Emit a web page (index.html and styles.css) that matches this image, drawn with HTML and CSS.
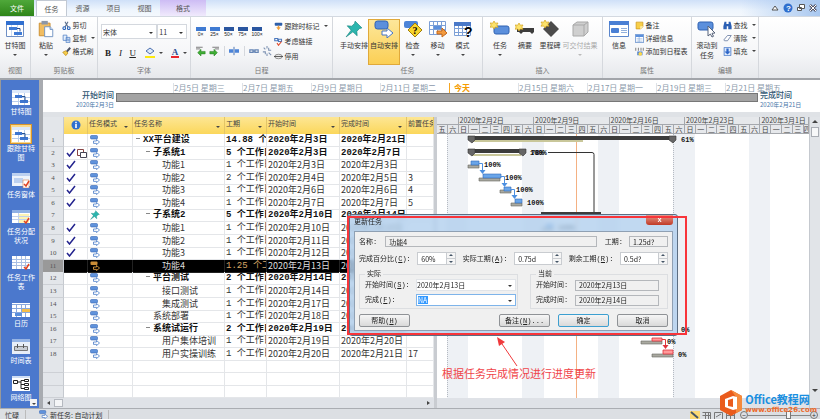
FILE: index.html
```html
<!DOCTYPE html>
<html lang="zh-CN">
<head>
  <meta charset="UTF-8">
  <meta name="viewport" content="width=device-width, initial-scale=1.0">
  <title>更新任务</title>
  <link rel="stylesheet" href="styles.css">
</head>
<body>
  <svg class="defs" width="0" height="0">
    <symbol id="i-gantt" viewBox="0 0 20 18"><path fill="#fff" stroke="#6f8fc4" d="M1.5 1.5h17v15h-17z"/><path fill="#2f6fd0" d="M1 1h18v4H1z"/><path stroke="#c9d9f0" d="M6.500 5v11M12.500 5v11"/><path fill="#3f7bd6" d="M4 7h8v3H4zM9 12h8v3H9z"/><path fill="none" stroke="#234a90" d="M12 8.500h3v3"/></symbol>
    <symbol id="i-paste" viewBox="0 0 18 20"><path fill="#f1bd62" stroke="#c98b2b" d="M1.500 3.500h12v14h-12z"/><path fill="#8c97a8" d="M4 1h7v4H4z"/><path fill="#fff" stroke="#6c8fc0" d="M7.500 7.500h6l3 3v8h-9z"/><path fill="#cfe0f6" stroke="#6c8fc0" d="M13.500 7.500v3h3"/></symbol>
    <symbol id="i-cut" viewBox="0 0 12 12"><path fill="none" stroke="#5c6f8d" stroke-width="1.500" d="M4 1l4 7M8 1L4 8"/><circle cx="3" cy="9.500" r="1.800" fill="none" stroke="#2460b8" stroke-width="1.400"/><circle cx="9" cy="9.500" r="1.800" fill="none" stroke="#2460b8" stroke-width="1.400"/></symbol>
    <symbol id="i-copy" viewBox="0 0 12 12"><path fill="#e4eefb" stroke="#4d7dc4" d="M1.500 1.500h5v7h-5zM5.500 4.500h5v7h-5z"/><path stroke="#4d7dc4" d="M7 7h3M7 9h3"/></symbol>
    <symbol id="i-brush" viewBox="0 0 12 12"><path fill="#f4cd4c" stroke="#bd8c1c" d="M1 7l4-2 3 3-3 3.500z"/><path stroke="#4a5266" stroke-width="2.500" d="M6.500 6L11 1"/></symbol>
    <symbol id="i-pin" viewBox="0 0 16 16"><path fill="#2bb5ae" stroke="#15857f" stroke-width=".6" d="M9 1l6 6-2 .5-2.500 2.500.3 4L7 10.500 1 15l4.500-6L2 5.200l4 .3L8.500 3z"/></symbol>
    <symbol id="i-auto" viewBox="0 0 20 18"><rect x="1" y="1" width="13" height="8" rx="2.500" fill="#5b8fdc" stroke="#2f62b4"/><path fill="#fff" stroke="#4475c4" d="M8 11h5V8l6 5-6 5v-3H8z"/></symbol>
    <symbol id="i-mode" viewBox="0 0 10 10"><rect x=".5" y=".5" width="7" height="3.500" rx="1" fill="#5f92dc" stroke="#3767b4" stroke-width=".6"/><path fill="#fff" stroke="#4a7cc8" stroke-width=".8" d="M3.500 6h3V4.500l3 2.500-3 2.600V8.400h-3z"/></symbol>
    <symbol id="i-mode-on" viewBox="0 0 10 10"><rect x=".5" y=".5" width="7" height="3.500" rx="1" fill="#c98c36"/><path fill="none" stroke="#d99a3e" stroke-width=".9" d="M3.500 6h3V4.500l3 2.500-3 2.600V8.400h-3z"/></symbol>
    <symbol id="i-check" viewBox="0 0 20 18"><rect x="1" y="1" width="14" height="7" rx="2" fill="#4c84d8"/><path fill="#f8d42c" stroke="#a07d0c" d="M12 3l7 7-7 7-7-7z"/><text x="9.500" y="14" font-size="10" font-weight="bold" font-family="Liberation Serif">?</text></symbol>
    <symbol id="i-move" viewBox="0 0 20 18"><path fill="#fff" stroke="#7c9fd6" d="M1.500 1.500h16v13h-16zM1 5.500h17M1 9.500h17M5.500 1v14M9.500 1v14M13.500 1v14"/><path fill="#5b8fdc" d="M6 6h7v3H6z"/><path fill="#f29a3f" stroke="#c8691a" d="M9 11h5V8l5 5-5 4v-3H9z"/></symbol>
    <symbol id="i-cal" viewBox="0 0 20 18"><path fill="#fff" stroke="#7c9fd6" d="M1.500 2.500h16v13h-16zM1 8.500h17M1 12.500h17M5.500 3v12M9.500 3v12M13.500 3v12"/><path fill="#4a79c8" d="M1 2h17v4H1z"/><text x="11" y="17" font-size="14" font-weight="bold" font-family="Liberation Sans">?</text></symbol>
    <symbol id="i-task" viewBox="0 0 20 18"><rect x="4" y="6" width="15" height="8" rx="2" fill="#5b8fdc" stroke="#3163b2"/><path fill="#fce36c" stroke="#d6a31a" stroke-width=".7" d="M4 1l1.200 2.200L8 3 6.800 5 8 7.200 5.200 7 4 9 2.800 7 0 7.200 1.200 5 0 3l2.800.2z"/></symbol>
    <symbol id="i-summary" viewBox="0 0 20 18"><path fill="#3d3d3d" d="M2 8h17v4l-2 2-2-2H8l-2 2-2-2H2z"/><path fill="#fce36c" stroke="#d6a31a" stroke-width=".7" d="M4 3l1.200 2.200L8 5 6.800 7 8 9.200 5.200 9 4 11 2.800 9 0 9.200 1.200 7 0 5l2.800.2z"/></symbol>
    <symbol id="i-mile" viewBox="0 0 20 18"><path fill="#4b4b4b" d="M11 1l8 8-8 8-8-8z"/><path fill="#fce36c" stroke="#d6a31a" stroke-width=".7" d="M5 0l1.200 2.200L9 2 7.800 4 9 6.200 6.200 6 5 8 3.800 6 1 6.200 2.200 4 1 2l2.800.2z"/></symbol>
    <symbol id="i-box" viewBox="0 0 20 18"><path fill="#cfcfcf" stroke="#a9a9a9" d="M3 5l4-3h11v10l-4 4H3zM3 5h11v11M14 5l4-3"/></symbol>
    <symbol id="i-info" viewBox="0 0 20 16"><path fill="#fff" stroke="#5b86cc" d="M.5.5h19v15H.5z"/><path fill="#4a7fd4" d="M0 0h20v4H0z"/><rect x="2" y="7" width="8" height="5" rx="1" fill="#4a7fd4"/><path stroke="#92b0dd" d="M12 7.500h6M12 9.500h6M12 11.500h6"/></symbol>
    <symbol id="i-note" viewBox="0 0 12 12"><path fill="#f8cf48" stroke="#cf9a1c" d="M1.500 1.500h9v6l-3 3h-6z"/><path fill="#fff0b0" d="M7 11V7h4z"/></symbol>
    <symbol id="i-detail" viewBox="0 0 12 12"><path fill="#fff" stroke="#4d7dc4" d="M.5.5h11v11H.5z"/><path fill="#5c90dc" d="M1 1h10v3H1z"/><path stroke="#8fb0de" d="M2 6.500h8M2 9.500h8M5.500 4v7"/></symbol>
    <symbol id="i-addtl" viewBox="0 0 12 12"><path stroke="#555" d="M1 1v4M4.500 1v4M8 1v4M11 1v4"/><path fill="#4a7fd4" d="M3 6h7v5H3z"/><circle cx="7" cy="9" r="2.500" fill="#fbd84a"/></symbol>
    <symbol id="i-scroll" viewBox="0 0 20 18"><rect x="1" y="2" width="15" height="8" rx="2" fill="#5b8fdc" stroke="#3163b2"/><path fill="#fff" stroke="#56627a" d="M11 6l7 7-3 .3 1.500 3-1.500.7-1.600-3L11 16z"/></symbol>
    <symbol id="i-find" viewBox="0 0 12 12"><path fill="#2b5fb4" d="M2 1h2.500v3h3V1H10l1.500 6v4H7V7H5v4H.5V7z"/></symbol>
    <symbol id="i-clear" viewBox="0 0 12 12"><path fill="#fff" stroke="#5a6f98" d="M1 8l5-6h5l-5 7H2z"/></symbol>
    <symbol id="i-fill" viewBox="0 0 12 12"><path fill="#dbe8fb" stroke="#3c70c4" d="M1.500.5h9v11h-9z"/><path fill="#2e66c8" d="M4.500 2h3v4H10l-4 4-4-4h2.500z"/></symbol>
    <symbol id="i-mark" viewBox="0 0 12 12"><rect x="1" y="1" width="10" height="4" rx="1" fill="#2d5ea9"/><path fill="#f2a13c" d="M5 5h2v2h2l-3 4-3-4h2z"/></symbol>
    <symbol id="i-link" viewBox="0 0 12 12"><path fill="none" stroke="#4d79bd" stroke-width="1.500" d="M1 2h4v3H1zM6 3h4v3H6z"/><path fill="none" stroke="#e04a2b" stroke-width="1.500" d="M4 8l2 3 4-5"/></symbol>
    <symbol id="i-stop" viewBox="0 0 12 12"><ellipse cx="6" cy="6" rx="5" ry="3" fill="#e8e8e8" stroke="#777"/><path stroke="#333" d="M0 6h12"/></symbol>
    <symbol id="i-arrowl" viewBox="0 0 12 12"><path stroke="#666" d="M0 1.500h8M0 3.500h5"/><path fill="#3fae35" stroke="#237a1c" stroke-width=".6" d="M2 8l4-4v2.500h5v3H6V12z"/></symbol>
    <symbol id="i-arrowr" viewBox="0 0 12 12"><path stroke="#666" d="M4 1.500h8M7 3.500h5"/><path fill="#3fae35" stroke="#237a1c" stroke-width=".6" d="M10 8L6 4v2.500H1v3h5V12z"/></symbol>
    <symbol id="i-split" viewBox="0 0 12 12"><path fill="#4c84d8" d="M0 4h5v4H0zM7 4h5v4H7z"/><path stroke="#2f5fa8" d="M6 1v10"/></symbol>
    <symbol id="i-chain" viewBox="0 0 12 12"><path fill="none" stroke="#6786b5" stroke-width="1.500" d="M1 4.500h4v3H1zM7 4.500h4v3H7zM4 6h4"/></symbol>
    <symbol id="i-unchain" viewBox="0 0 12 12"><path fill="none" stroke="#7f93b3" stroke-width="1.300" d="M1 7h3v3M8 2v3h3M2 2l2 2M8 8l3 3M6 0v3M6 9v3"/></symbol>
    <symbol id="v-gantt" viewBox="0 0 18 15"><path fill="#fff" d="M0 0h18v15H0z"/><path fill="#dce8fa" d="M0 0h18v3H0z"/><path stroke="#b9cdec" d="M6.500 3v12M12.500 3v12M0 7.500h18M0 11.500h18"/><path fill="#3e76d0" d="M3 5h7v3H3zM8 10h8v3H8z"/><path fill="none" stroke="#24508f" d="M10 6.500h3v4"/></symbol>
    <symbol id="v-form" viewBox="0 0 18 15"><path fill="#eef3fb" d="M0 0h18v13H0z"/><path fill="#bcd0f0" d="M0 0h18v3H0zM2 5h9v5H2z"/><path fill="#fff" stroke="#d9824a" stroke-width=".6" d="M11 7h6v8h-6z"/><path fill="none" stroke="#e04322" stroke-width="1.500" d="M12 11l2 2 3-5"/></symbol>
    <symbol id="v-usage" viewBox="0 0 18 15"><path fill="#fff" d="M0 0h18v13H0z"/><path fill="#8fb0e4" d="M0 0h18v3H0z"/><path fill="#fdf4b4" d="M7 4h10v9H7z"/><path stroke="#c3d2ec" d="M0 6.500h18M0 9.500h18M6.500 3v10"/><path fill="none" stroke="#e04322" stroke-width="1.500" d="M12 11l2 2 3-5"/></symbol>
    <symbol id="v-sheet" viewBox="0 0 18 15"><path fill="#fff" d="M0 0h18v13H0z"/><path stroke="#a9bfe4" d="M0 3.500h18M0 6.500h18M0 9.500h18M4.500 0v13M9.500 0v13M13.500 0v13"/><path fill="none" stroke="#e04322" stroke-width="1.500" d="M12 11l2 2 3-5"/></symbol>
    <symbol id="v-cal" viewBox="0 0 18 15"><path fill="#fff" d="M0 1h18v14H0z"/><path stroke="#89a8dc" d="M0 2.500h18M0 6.500h18M0 10.500h18M4.500 3v12M9.500 3v12M13.500 3v12"/><path fill="#f4bd4a" d="M10 7h8v3h-8z"/><path fill="#5b8fdc" d="M3 11h7v3H3z"/></symbol>
    <symbol id="v-line" viewBox="0 0 18 15"><path fill="#e8eef8" d="M0 0h18v15H0z"/><path fill="#96b4e4" d="M0 0h18v3H0z"/><path fill="#c9cdd4" stroke="#777" d="M2.500 7.500h13v4h-13z"/><path stroke="#555" d="M5.500 5v4M11.500 5v4"/></symbol>
    <symbol id="v-net" viewBox="0 0 18 15"><path fill="#fff" d="M0 0h18v15H0z"/><path fill="#cfdef5" d="M0 0h18v2H0z"/><path fill="none" stroke="#222" d="M1.500 4.500h4v3h-4zM12.500 3.500h4v2h-4zM12.500 7.500h4v2h-4zM12.500 11.500h4v2h-4zM6 6h3M12 4.500H9v8h3M9 8.500h3"/></symbol>
  </svg>

  <nav class="tabs">
    <button class="tab file">文件</button>
    <button class="tab active">任务</button>
    <button class="tab">资源</button>
    <button class="tab">项目</button>
    <button class="tab">视图</button>
    <button class="tab format">格式</button>
    <div class="window-tools">
      <svg width="8" height="8" viewBox="0 0 8 8"><path fill="#fff" stroke="#555" d="M1 6l3-4 3 4z"/></svg>
      <svg width="10" height="10" viewBox="0 0 10 10"><circle cx="5" cy="5" r="4.500" fill="#2f6fce"/><text x="3" y="8" font-size="8" font-weight="bold" fill="#fff" font-family="Liberation Sans">?</text></svg>
      <svg width="8" height="8" viewBox="0 0 8 8"><path fill="#fff" stroke="#555" d="M2.500.5h5v4h-5zM.5 3.500h4v3h-4z"/></svg>
      <svg width="8" height="8" viewBox="0 0 8 8"><path stroke="#556" stroke-width="2.500" d="M1 1l6 6M7 1L1 7"/><path stroke="#fff" d="M1 1l6 6M7 1L1 7"/></svg>
    </div>
  </nav>

  <header class="ribbon">
    <section class="group g-view">
      <div class="group-body"><button class="big"><svg><use href="#i-gantt"/></svg>甘特图<i class="caret"></i></button></div>
      <h2>视图</h2>
    </section>
    <section class="group g-clip">
      <div class="group-body">
        <button class="big"><svg><use href="#i-paste"/></svg>粘贴<i class="caret"></i></button>
        <div class="stack">
          <button class="small"><svg><use href="#i-cut"/></svg>剪切</button>
          <button class="small"><svg><use href="#i-copy"/></svg>复制<i class="caret"></i></button>
          <button class="small"><svg><use href="#i-brush"/></svg>格式刷</button>
        </div>
      </div>
      <h2>剪贴板</h2>
    </section>
    <section class="group g-font">
      <div class="group-body font-body">
        <div class="font-pick">
          <span class="combo family"><select aria-label="字体"><option>宋体</option></select></span>
          <span class="combo size"><select aria-label="字号"><option>11</option></select></span>
        </div>
        <div class="font-style">
          <button><b>B</b></button><button><em>I</em></button><button><u>U</u></button>
          <button class="color fill-color"><svg width="10" height="8" viewBox="0 0 10 8"><path fill="#dce8fa" stroke="#4a6fae" d="M1 4l4-3 4 3-4 3z"/></svg></button><i class="caret"></i>
          <button class="color text-color"><b>A</b></button><i class="caret"></i>
        </div>
      </div>
      <h2>字体</h2>
    </section>
    <section class="group g-sched">
      <div class="group-body">
        <div class="sched-left">
          <div class="percents"><button>0×</button><button>25×</button><button>50×</button><button>75×</button><button>100×</button></div>
          <div class="sched-tools">
            <button aria-label="降级"><svg><use href="#i-arrowl"/></svg></button><button aria-label="升级"><svg><use href="#i-arrowr"/></svg></button>
            <button class="sep" aria-label="拆分"><svg><use href="#i-split"/></svg></button>
            <button class="sep" aria-label="链接"><svg><use href="#i-chain"/></svg></button><button aria-label="取消链接"><svg><use href="#i-unchain"/></svg></button>
          </div>
        </div>
        <div class="stack wide">
          <button class="small"><svg><use href="#i-mark"/></svg>跟踪时标记<i class="caret"></i></button>
          <button class="small"><svg><use href="#i-link"/></svg>考虑链接</button>
          <button class="small"><svg><use href="#i-stop"/></svg>停用</button>
        </div>
      </div>
      <h2>日程</h2>
    </section>
    <section class="group g-task">
      <div class="group-body">
        <button class="big"><svg><use href="#i-pin"/></svg>手动安排</button>
        <button class="big on"><svg><use href="#i-auto"/></svg>自动安排</button>
        <button class="big"><svg><use href="#i-check"/></svg>检查<i class="caret"></i></button>
        <button class="big"><svg><use href="#i-move"/></svg>移动<i class="caret"></i></button>
        <button class="big"><svg><use href="#i-cal"/></svg>模式<i class="caret"></i></button>
      </div>
      <h2>任务</h2>
    </section>
    <section class="group g-insert">
      <div class="group-body">
        <button class="big"><svg><use href="#i-task"/></svg>任务<i class="caret"></i></button>
        <button class="big"><svg><use href="#i-summary"/></svg>摘要</button>
        <button class="big"><svg><use href="#i-mile"/></svg>里程碑</button>
        <button class="big off"><svg><use href="#i-box"/></svg>可交付结果<i class="caret"></i></button>
      </div>
      <h2>插入</h2>
    </section>
    <section class="group g-props">
      <div class="group-body">
        <button class="big"><svg><use href="#i-info"/></svg>信息</button>
        <div class="stack">
          <button class="small"><svg><use href="#i-note"/></svg>备注</button>
          <button class="small"><svg><use href="#i-detail"/></svg>详细信息</button>
          <button class="small"><svg><use href="#i-addtl"/></svg>添加到日程表</button>
        </div>
      </div>
      <h2>属性</h2>
    </section>
    <section class="group g-edit">
      <div class="group-body">
        <button class="big"><svg><use href="#i-scroll"/></svg>滚动到<br>任务</button>
        <div class="stack">
          <button class="small"><svg><use href="#i-find"/></svg>查找<i class="caret"></i></button>
          <button class="small"><svg><use href="#i-clear"/></svg>清除<i class="caret"></i></button>
          <button class="small"><svg><use href="#i-fill"/></svg>填充<i class="caret"></i></button>
        </div>
      </div>
      <h2>编辑</h2>
    </section>
  </header>

  <main class="workspace">
    <nav class="views">
      <a href="#"><span><svg><use href="#v-gantt"/></svg></span>甘特图</a>
      <a href="#" class="current"><span><svg><use href="#v-gantt"/></svg></span>跟踪甘特图</a>
      <a href="#"><span><svg><use href="#v-form"/></svg></span>任务窗体</a>
      <a href="#"><span><svg><use href="#v-usage"/></svg></span>任务分配状况</a>
      <a href="#"><span><svg><use href="#v-sheet"/></svg></span>任务工作表</a>
      <a href="#"><span><svg><use href="#v-cal"/></svg></span>日历</a>
      <a href="#"><span><svg><use href="#v-line"/></svg></span>时间表</a>
      <a href="#"><span><svg><use href="#v-net"/></svg></span>网络图</a>
      <button class="more" aria-label="更多"><i class="caret"></i></button>
    </nav>

    <div class="content">
      <section class="timeline">
        <div class="edge start"><strong>开始时间</strong><small>2020年2月3日</small></div>
        <div class="track">
          <div class="ticks">
            <span>2月5日 星期三</span><span>2月7日 星期五</span><span>2月9日 星期日</span><span>2月11日 星期二</span><span class="today">今天</span><span>2月15日 星期六</span><span>2月17日 星期一</span><span>2月19日 星期三</span><span>2月21日 星期五</span>
          </div>
          <div class="track-bar"></div>
        </div>
        <div class="edge end"><strong>完成时间</strong><small>2020年2月21日</small></div>
      </section>

      <div class="split">
        <section class="sheet">
          <table>
            <thead>
              <tr>
                <th></th>
                <th class="info"><svg width="10" height="10" viewBox="0 0 10 10"><circle cx="5" cy="5" r="4.500" fill="#2e6fd0"/><path stroke="#fff" stroke-width="1.600" d="M5 4v4M5 1.800v1.400"/></svg></th>
                <th>任务模式<i class="caret"></i></th>
                <th>任务名称<i class="caret"></i></th>
                <th>工期<i class="caret"></i></th>
                <th>开始时间<i class="caret"></i></th>
                <th>完成时间<i class="caret"></i></th>
                <th>前置任务</th>
              </tr>
            </thead>
            <tbody id="rows"></tbody>
          </table>
          <div class="hscroll"><i class="left"></i><i class="thumb"></i><i class="right"></i></div>
        </section>

        <section class="gantt">
          <div class="chart-side">
            <div class="scale weeks"><span></span><span>2020年2月2日</span><span>2020年2月9日</span><span>2020年2月16日</span><span>2020年2月23日</span><span>2020年3月1日</span></div>
            <div class="scale days" id="days"></div>
            <svg class="chart">
              <g fill="#eef1f5"><path d="M10 0h21v264h-21zM85 0h22v264h-22zM161 0h21v264h-21zM236 0h22v264h-22zM312 0h21v264h-21z"/></g>
              <path stroke="#b5bac2" stroke-dasharray="1 1" d="M10.500 0v264M236.500 0v264"/>
              <path stroke="#f4b183" d="M139.500 0v264"/>
              <g fill="#a9a9a0" stroke="#66665f" stroke-width=".6">
                <path d="M31 31h11v3h-11zM42 44h21v3h-21zM63 56h11v3h-11zM74 69h11v3h-11zM105 94h11v3h-11zM204 207h21v3h-21zM215 220h21v3h-21z"/>
              </g>
              <g fill="#6aa5e8" stroke="#2f6ab8" stroke-width=".6">
                <path d="M34 27h8v4h-8zM46 40h18v4h-18zM67 53h7v4h-7zM78 65h7v4h-7zM109 90h7v4h-7z"/>
              </g>
              <g fill="#ff9a9a" stroke="#e0343c" stroke-width=".8">
                <path d="M215 204h10v3h-10zM226 216h10v4h-10z"/>
              </g>
              <g fill="none" stroke="#4c8fe0">
                <path d="M42 29.500h3.500v8M64 42.500h3.500v8M74 55.500h3.500v8"/>
              </g>
              <path fill="#4c8fe0" d="M42.500 36h6l-3 4zM64.500 49h6l-3 4zM74.500 61h6l-3 4z"/>
              <path fill="none" stroke="#e0343c" d="M225 205.500h3.500v7"/>
              <path fill="#e0343c" d="M225.500 211h6l-3 4z"/>
              <path fill="none" stroke="#333" d="M111 18.500h44q2 0 2 2v60"/>
              <path fill="#3c3c3c" d="M32 2h206v4h-206zM32 15h56v4h-56zM104 78h60v3h-60z"/>
              <path fill="#c9c79a" d="M35 6h111v2h-111zM35 20h49v2h-49z"/>
              <g fill="#666" stroke="#333" stroke-width=".6">
                <path d="M31 2h7v4l-3 3-4-3zM232 2h7v4l-3 3-4-3zM31 15h7v4l-3 3-4-3zM82 15h7v4l-3 3-4-3z"/>
              </g>
              <g class="percent">
                <text x="244" y="8">61%</text><text x="93" y="21">100%</text><text x="94" y="21">78%</text>
                <text x="47" y="33">100%</text><text x="68" y="46">100%</text><text x="79" y="58">100%</text><text x="90" y="71">100%</text>
                <text x="121" y="96">100%</text>
                <text x="244" y="198">0%</text><text x="230" y="210">0%</text><text x="241" y="223">0%</text>
              </g>
            </svg>
            <div class="hscroll"></div>
          </div>
          <div class="vscroll"><i class="up"></i><i class="thumb"></i><i class="down"></i></div>
        </section>
      </div>
    </div>
  </main>

  <footer class="status">
    <span class="busy">忙碌</span>
    <span class="mode"><svg width="9" height="9"><use href="#i-mode"/></svg>新任务: 自动计划</span>
    <div class="status-views">
      <svg class="on" viewBox="0 0 10 9"><path stroke="#456" stroke-width="2" d="M1 1l7 6"/></svg>
      <svg viewBox="0 0 10 9"><path fill="none" stroke="#777" d="M.5 1.500h8v7M.5 4.500h8M3.500 1v8M6.500 1v8"/></svg>
      <svg viewBox="0 0 10 9"><path fill="none" stroke="#777" d="M.5 1.500h8v7h-8zM2 6l5-3"/></svg>
      <svg viewBox="0 0 10 9"><path fill="none" stroke="#777" d="M.5 1.500h8v7h-8zM4.500 1v8M0 4.500h9"/></svg>
    </div>
    <button class="zoom-btn">−</button><input type="range" aria-label="缩放" value="66"><button class="zoom-btn">+</button>
  </footer>

  <form class="dialog">
    <div class="title"><span>更新任务</span><button type="button" class="close">x</button></div>
    <div class="panel">
      <div class="line">
        <label for="name">名称:</label><input id="name" class="grow" value="功能4" readonly>
        <label for="duration" class="before-duration">工期:</label><input id="duration" class="w38" value="1.25d?" readonly>
      </div>
      <div class="line spin-line">
        <label for="done">完成百分比(<u>C</u>):</label><span class="spin w38"><input id="done" value="60%"><i></i></span>
        <label for="actual">实际工期(<u>A</u>):</label><span class="spin w48"><input id="actual" value="0.75d"><i></i></span>
        <label for="left">剩余工期(<u>R</u>):</label><span class="spin w48"><input id="left" value="0.5d?"><i></i></span>
      </div>
      <div class="sets">
        <fieldset class="real">
          <legend>实际</legend>
          <label for="start">开始时间(<u>S</u>):</label><span class="combo"><select id="start"><option>2020年2月13日</option></select></span>
          <label for="finish">完成(<u>F</u>):</label><span class="combo focus"><input id="finish" value="NA"></span>
        </fieldset>
        <fieldset class="now">
          <legend>当前</legend>
          <label for="cstart">开始时间:</label><input id="cstart" value="2020年2月13日" readonly>
          <label for="cfinish">完成时间:</label><input id="cfinish" value="2020年2月14日" readonly>
        </fieldset>
      </div>
      <div class="actions">
        <button type="button" class="help">帮助(<u>H</u>)</button>
        <button type="button">备注(<u>N</u>)...</button>
        <button type="button" class="ok">确定</button>
        <button type="button">取消</button>
      </div>
    </div>
  </form>
  <div class="red-frame"></div>
  <svg class="red-arrow" width="24" height="30" viewBox="0 0 24 30"><path fill="none" stroke="#f0393c" d="M21 29L4 4"/><path fill="#f0393c" d="M1 0l8 5-6 4z"/></svg>
  <p class="hint">根据任务完成情况进行进度更新</p>
  <div class="brand">
    <svg width="22" height="26" viewBox="0 0 22 26"><path fill="#ea5b1c" d="M11 0l11 6v14l-11 6-11-6V6z"/><path fill="#f58a3c" d="M11 0l11 6v14l-6 3V7z"/><path fill="#fff" fill-rule="evenodd" d="M5 9l8-3 4 1v12l-4 1-8-3zM8 10v6l5 1V8.500z"/></svg>
    <div><strong>Office教程网</strong><span>www.office26.com</span></div>
  </div>

  <script>
    // flags: s = summary, c = complete, p = pinned, x = selected
    const tasks = [
      ['XX平台建设', 0, '14.88 个工作日', '2020年2月3日', '2020年2月21日', '', 's'],
      ['子系统1', 1, '5 个工作日', '2020年2月3日', '2020年2月7日', '', 'scn'],
      ['功能1', 2, '1 个工作日', '2020年2月3日', '2020年2月3日', '', 'c'],
      ['功能2', 2, '2 个工作日', '2020年2月4日', '2020年2月5日', '3', 'c'],
      ['功能3', 2, '1 个工作日', '2020年2月6日', '2020年2月6日', '4', 'c'],
      ['功能4', 2, '1 个工作日', '2020年2月7日', '2020年2月7日', '5', 'c'],
      ['子系统2', 1, '5 个工作日', '2020年2月10日', '2020年2月14日', '', 'sp'],
      ['功能1', 2, '1 个工作日', '2020年2月10日', '2020年2月10日', '', 'c'],
      ['功能2', 2, '1 个工作日', '2020年2月11日', '2020年2月11日', '', 'c'],
      ['功能3', 2, '1 个工作日', '2020年2月12日', '2020年2月12日', '', 'c'],
      ['功能4', 2, '1.25 个工作日', '2020年2月13日', '2020年2月14日', '', 'x'],
      ['平台测试', 1, '2 个工作日', '2020年2月14日', '2020年2月17日', '', 's'],
      ['接口测试', 2, '1 个工作日', '2020年2月14日', '2020年2月14日', '', ''],
      ['集成测试', 2, '1 个工作日', '2020年2月17日', '2020年2月17日', '', ''],
      ['系统部署', 1, '1 个工作日', '2020年2月18日', '2020年2月18日', '', ''],
      ['系统试运行', 1, '2 个工作日', '2020年2月19日', '2020年2月20日', '', 's'],
      ['用户集体培训', 2, '1 个工作日', '2020年2月19日', '2020年2月20日', '', ''],
      ['用户实操训练', 2, '1 个工作日', '2020年2月20日', '2020年2月21日', '17', '']
    ];
    const tick = '<svg width="10" height="9" viewBox="0 0 10 9"><path fill="none" stroke="#23238e" stroke-width="1.500" d="M1 5l2.500 3L9 1"/></svg>';
    const clip = '<svg width="10" height="10" viewBox="0 0 10 10"><path fill="#fff" stroke="#844" d="M.5 1.500h6v6h-6z"/><path fill="#fff" stroke="#445" d="M3.500 4.500h6v5h-6z"/></svg>';
    let html = '';
    for (let i = 0; i < 21; i++) {
      const t = tasks[i];
      if (!t) {
        html += '<tr><th></th>' + '<td></td>'.repeat(7) + '</tr>';
        continue;
      }
      const f = t[6];
      const icon = f.includes('p') ? 'i-pin' : f.includes('x') ? 'i-mode-on' : 'i-mode';
      html += `<tr class="${f.includes('s') ? 'summary' : ''} ${f.includes('x') ? 'selected' : ''}"><th>${i + 1}</th>`
        + `<td>${f.includes('c') ? tick : ''}${f.includes('n') ? clip : ''}</td>`
        + `<td><svg width="10" height="10"><use href="#${icon}"/></svg></td>`
        + `<td class="name level${t[1]}">${f.includes('s') ? '<i class="fold"></i>' : ''}${t[0]}</td>`
        + `<td class="duration">${t[2]}</td><td>${t[3]}</td><td>${t[4]}</td><td>${t[5]}</td></tr>`;
    }
    document.getElementById('rows').innerHTML = html;

    const week = '日一二三四五六';
    let days = '';
    for (let d = 5; d < 40; d++) {
      days += `<span>${week[d % 7]}</span>`;
    }
    document.getElementById('days').innerHTML = days;
  </script>
</body>
</html>
```
FILE: styles.css
```css
* {
    box-sizing: border-box;
}

body {
    position: relative;
    display: flex;
    flex-direction: column;
    height: 100vh;
    margin: 0;
    overflow: hidden;
    font-family: "Noto Sans CJK SC", sans-serif;
    font-size: 7px;
    line-height: 10px;
    color: #333;
    background-color: #fff;
}

button, input, select {
    margin: 0;
    padding: 0;
    border: none;
    border-radius: 0;
    background: none;
    font: inherit;
    color: inherit;
    appearance: none;
}

a {
    color: inherit;
    text-decoration: none;
}

.defs {
    position: absolute;
}

.caret {
    display: inline-block;
    border: 2px solid transparent;
    border-top-color: #444;
    border-bottom: none;
}

/* tabs */
.tabs {
    display: flex;
    flex: none;
    height: 16px;
    background: linear-gradient(#cfe0f8, #eef5fd 60%, #f4f8fd);
}
.tab {
    width: 31px;
    color: #555;
}
.tab.file {
    width: 34px;
    margin-right: 2px;
    color: #fff;
    background: linear-gradient(#4fa83a, #2d8418);
}
.tab.active {
    border: 1px solid #c2c9d3;
    border-bottom: none;
    background-color: #fff;
}
.tab.format {
    width: 46px;
    background: linear-gradient(#cdbcf4, #f0eafc);
}
.window-tools {
    display: flex;
    align-items: center;
    gap: 4px;
    margin-left: auto;
    padding: 0 3px 0 30px;
    background: linear-gradient(90deg, transparent, #a9c8f0);
}

/* ribbon */
.ribbon {
    display: flex;
    flex: none;
    height: 64px;
    border-top: 1px solid #d3d9e1;
    border-bottom: 2px solid #a2a5aa;
    background: linear-gradient(#fff, #f5f6f8 60%, #e6e8ec);
}
.group {
    display: flex;
    flex-direction: column;
    flex: none;
    padding-top: 2px;
    border-right: 1px solid #d5d8dd;
}
.group-body {
    display: flex;
    justify-content: center;
    height: 46px;
}
.group h2 {
    margin: 0;
    font-size: 7px;
    font-weight: normal;
    text-align: center;
    color: #777;
}
.g-view { width: 31px; }
.g-clip { width: 67px; }
.g-font { width: 93px; }
.g-sched { width: 142px; }
.g-task { width: 150px; }
.g-insert { width: 120px; }
.g-props { width: 89px; }
.g-edit { width: 67px; }

.big {
    display: flex;
    flex-direction: column;
    align-items: center;
    min-width: 25px;
    padding-top: 1px;
}
.big svg {
    width: 20px;
    height: 18px;
    margin-bottom: 2px;
}
.big .caret {
    margin-top: 4px;
}
.big.on {
    min-width: 32px;
    border: 1px solid #e0a93a;
    padding-top: 0;
    background: linear-gradient(#fde79a, #fbcf55);
}
.big.off {
    color: #aaa;
}
.big.off .caret {
    border-top-color: #bbb;
}
.stack {
    display: flex;
    flex-direction: column;
    gap: 3px;
    padding: 1px 0 0 3px;
}
.stack.wide {
    gap: 5px;
    padding: 2px 0 0 2px;
}
.small {
    display: flex;
    align-items: center;
    gap: 2px;
    height: 10px;
    white-space: nowrap;
}
.small svg {
    width: 9px;
    height: 9px;
}
.small .caret {
    margin-left: 2px;
}

.combo {
    position: relative;
    display: flex;
    border: 1px solid #d4d8de;
    background-color: #fff;
}
.combo::after {
    content: "";
    position: absolute;
    top: 50%;
    right: 3px;
    border: 2px solid transparent;
    border-top-color: #333;
    border-bottom: none;
}
.combo select {
    width: 100%;
}

.font-body {
    flex-direction: column;
    justify-content: flex-start;
    gap: 8px;
    padding: 5px 3px 0;
}
.font-pick {
    display: flex;
}
.font-pick .combo {
    height: 15px;
    padding-left: 1px;
}
.family {
    flex: 2;
}
.size {
    flex: 1;
}
.font-style {
    display: flex;
    align-items: center;
    gap: 4px;
    padding-left: 3px;
    font-family: "Liberation Serif", serif;
    font-size: 9px;
    color: #222;
}
.font-style button {
    width: 10px;
}
.font-style .color {
    margin-left: 4px;
    border-bottom: 2px solid #fde910;
    line-height: 8px;
}
.font-style .text-color {
    border-bottom-color: #e8252c;
    color: #2d4f93;
}

.sched-left {
    display: flex;
    flex-direction: column;
    gap: 9px;
    padding-top: 8px;
}
.percents {
    display: flex;
    gap: 4px;
}
.percents button {
    width: 10px;
    border-top: 4px solid #3f7ad2;
    font-family: "Liberation Sans", sans-serif;
    font-size: 5px;
    line-height: 6px;
    color: #222;
}
.percents button:nth-child(n+3) {
    border-top-color: #2a56a0;
}
.sched-tools {
    display: flex;
    gap: 3px;
}
.sched-tools svg {
    display: block;
    width: 10px;
    height: 10px;
}
.sched-tools .sep {
    margin-left: 2px;
    padding-left: 4px;
    border-left: 1px solid #d5d8dd;
}

/* left view bar */
.workspace {
    display: flex;
    flex: 1;
    min-height: 0;
}
.views {
    position: relative;
    display: flex;
    flex: none;
    flex-direction: column;
    gap: 8px;
    width: 43px;
    padding: 7px 5px 0 4px;
    border-left: 1px solid #999;
    border-right: 4px solid #a8abb0;
    overflow: hidden;
    background-color: #4b78cd;
    color: #fff;
    line-height: 9px;
    text-align: center;
}
.views a {
    display: block;
    flex: none;
    margin-right: -3px;
    padding: 0 2px;
}
.views a span {
    display: flex;
    align-items: center;
    justify-content: center;
    width: 22px;
    height: 20px;
    margin: 0 auto;
}
.views a svg {
    width: 18px;
    height: 15px;
}
.views .current span {
    border: 1px solid #d9962c;
    background-color: #fbd98a;
}
.more {
    position: absolute;
    right: 2px;
    bottom: 2px;
    width: 7px;
    height: 7px;
    background-color: #f4f4f4;
    line-height: 4px;
}

/* timeline */
.content {
    display: flex;
    flex: 1;
    flex-direction: column;
    min-width: 0;
}
.timeline {
    display: flex;
    flex: none;
    height: 32px;
    overflow: hidden;
}
.edge {
    display: flex;
    flex-direction: column;
    padding-top: 10px;
    color: #2d5572;
}
.edge strong {
    font-size: 8px;
    font-weight: 500;
}
.edge small {
    font-size: 6px;
    line-height: 9px;
    color: #4876a8;
}
.edge.start {
    width: 71px;
    align-items: flex-end;
}
.edge.end {
    width: 60px;
}
.track {
    flex: 1;
    margin: 3px 2px 0;
}
.ticks {
    display: grid;
    grid-template-columns: repeat(9, 1fr);
    margin: 0 -36px 0 57px;
    font-size: 8px;
    color: #8b9aab;
    white-space: nowrap;
}
.ticks span {
    border-left: 1px solid #dde2e8;
}
.ticks .today {
    padding-left: 4px;
    border-left-color: #f5a623;
    color: #f59c00;
    font-weight: bold;
}
.track-bar {
    height: 9px;
    border: 1px solid #777;
    background-color: #a3a3a3;
}

/* task sheet */
.split {
    display: flex;
    flex: 1;
    min-height: 0;
    border-top: 5px solid #dfe2e6;
}
.sheet {
    display: flex;
    flex: 0 0 391px;
    flex-direction: column;
    min-width: 0;
}
table, tbody {
    display: flex;
    flex: 1;
    flex-direction: column;
    min-height: 0;
}
thead {
    display: block;
}
tr {
    display: grid;
    flex: 1;
    grid-template-columns: 21px 24px 45px 92px 42px 73px 67px 1fr;
    min-height: 0;
}
thead tr {
    height: 17px;
}
thead th {
    position: relative;
    padding: 1px 0 0 1px;
    border-right: 1px solid #e3c567;
    overflow: hidden;
    background: linear-gradient(#fde694, #fbd75b);
    font-weight: normal;
    text-align: left;
    white-space: nowrap;
    color: #444;
}
thead th:first-child {
    border-color: #c5c9cf;
    background: #e3e6ea;
}
thead .info {
    padding: 3px 0 0 7px;
}
thead .caret {
    position: absolute;
    right: 4px;
    bottom: 6px;
}
tbody th {
    border-right: 1px solid #c5c9cf;
    border-bottom: 1px solid #cdd0d5;
    background-color: #e3e6ea;
    font-family: "Liberation Serif", serif;
    font-size: 7px;
    font-weight: normal;
    color: #555;
}
td {
    padding: 0 0 0 1px;
    border-right: 1px solid #e4e6e9;
    border-bottom: 1px solid #e4e6e9;
    overflow: hidden;
    font-size: 9px;
    line-height: 12px;
    white-space: nowrap;
}
td svg {
    display: inline-block;
    margin: 1px 0 0 1px;
    vertical-align: top;
}
.duration {
    font-family: "Liberation Mono", "Noto Sans CJK SC", monospace;
}
.summary td {
    font-family: "Liberation Mono", "Noto Sans CJK SC", monospace;
    font-weight: bold;
    color: #111;
}
.name.level0 { padding-left: 10px; }
.name.level1 { padding-left: 20px; }
.name.level2 { padding-left: 29px; }
.summary .name.level0 { padding-left: 3px; }
.summary .name.level1 { padding-left: 13px; }
.fold {
    display: inline-block;
    width: 4px;
    height: 1px;
    margin-right: 3px;
    background-color: #888;
    vertical-align: 3px;
}
.selected td {
    border-color: #222;
    background-color: #000;
    color: #ddd;
}
.selected th {
    background-color: #999;
}
.selected .duration {
    color: #d8a868;
}
.hscroll {
    display: flex;
    flex: none;
    align-items: center;
    justify-content: space-between;
    height: 10px;
    padding: 0 4px;
    background-color: #dfe2e7;
}
.hscroll .left, .hscroll .right {
    border: 2px solid transparent;
    border-right: 3px solid #444;
    border-left: none;
}
.hscroll .right {
    border-right: none;
    border-left: 3px solid #444;
}
.hscroll .thumb {
    width: 9px;
    height: 8px;
    margin: 0 auto 0 4px;
    border: 1px solid #b5b9c0;
    background-color: #f4f5f7;
}

/* gantt chart */
.gantt {
    display: flex;
    flex: 1;
    min-width: 0;
    border-left: 3px solid #c9ccd1;
}
.chart-side {
    display: flex;
    flex: 1;
    flex-direction: column;
    min-width: 0;
}
.scale {
    display: grid;
    flex: none;
    grid-template-columns: repeat(34, 2fr) 1fr;
    overflow: hidden;
    background-color: #e6e8eb;
    color: #444;
    white-space: nowrap;
}
.scale span {
    min-width: 0;
    border-right: 1px solid #a5a8ad;
    border-bottom: 1px solid #a5a8ad;
    overflow: hidden;
}
.weeks {
    height: 8px;
    line-height: 7px;
}
.weeks span {
    grid-column: span 7;
    padding-left: 1px;
}
.weeks span:first-child {
    grid-column: span 2;
}
.weeks span:last-child {
    grid-column: span 5;
}
.days {
    height: 9px;
    line-height: 8px;
    text-align: center;
}
.chart {
    display: block;
    flex: 1;
    width: 100%;
    min-height: 0;
}
.percent {
    fill: #111;
    font-family: "Liberation Mono", monospace;
    font-size: 7px;
    font-weight: bold;
}
.vscroll {
    display: flex;
    flex-direction: column;
    align-items: center;
    width: 11px;
    padding: 3px 0 16px;
    border-left: 1px solid #c5c9cf;
    background-color: #e1e4e8;
}
.vscroll .up, .vscroll .down {
    border: 3px solid transparent;
    border-top: none;
    border-bottom-color: #444;
}
.vscroll .down {
    margin-top: auto;
    border-top: 3px solid #444;
    border-bottom: none;
}
.vscroll .thumb {
    width: 8px;
    height: 10px;
    margin-top: 4px;
    border: 1px solid #a9adb4;
    background-color: #f7f8f9;
}

/* status bar */
.status {
    display: flex;
    flex: none;
    align-items: center;
    height: 11px;
    padding: 2px 2px 0 5px;
    border-top: 1px solid #aaadb2;
    background-color: #dcdfe3;
    overflow: hidden;
}
.busy {
    width: 21px;
    border-right: 1px solid #bbb;
}
.mode {
    display: flex;
    gap: 2px;
    margin-left: 13px;
    padding-right: 5px;
    border-right: 1px solid #bbb;
}
.status-views {
    display: flex;
    gap: 2px;
    margin: 0 4px 0 auto;
}
.status-views svg {
    width: 10px;
    height: 9px;
}
.status-views .on {
    background-color: #fbd974;
}
.zoom-btn {
    width: 8px;
    height: 8px;
    border: 1px solid #777;
    border-radius: 50%;
    line-height: 6px;
}
.status input {
    width: 62px;
    height: 8px;
    background: linear-gradient(#888, #888) center / 100% 1px no-repeat;
}
.status input::-webkit-slider-thumb {
    width: 5px;
    height: 8px;
    border: 1px solid #777;
    background-color: #f4f4f4;
    appearance: none;
}

/* update dialog */
.dialog {
    position: absolute;
    top: 214px;
    left: 349px;
    width: 329px;
    padding: 0 4px 4px;
    border: 1px solid #5c6e82;
    border-radius: 3px;
    background-color: rgba(178, 208, 238, .8);
    backdrop-filter: blur(2px);
    font-family: "Liberation Mono", "Noto Sans CJK SC", monospace;
    color: #222;
}
.title {
    display: flex;
    justify-content: space-between;
    height: 16px;
    line-height: 15px;
}
.close {
    width: 27px;
    height: 10px;
    border-radius: 0 0 3px 3px;
    background: linear-gradient(#e39a8c, #c13a26);
    font-weight: bold;
    line-height: 8px;
    color: #fff;
}
.panel {
    display: flex;
    flex-direction: column;
    gap: 5px;
    padding: 4px 4px 3px;
    border: 1px solid #8fa0b3;
    background-color: #f0f0f0;
}
.line {
    display: flex;
    align-items: center;
    gap: 8px;
}
.line .before-duration {
    margin-right: -2px;
}
.panel label {
    white-space: nowrap;
}
.panel input, .panel select {
    height: 11px;
    padding: 0 3px;
    border: 1px solid #b4b7bb;
    font-family: "Noto Sans CJK SC", sans-serif;
    line-height: 9px;
}
.grow {
    flex: 1;
}
.w38 {
    width: 39px;
}
.w48 {
    width: 48px;
}
.spin-line {
    justify-content: space-between;
    gap: 4px;
}
.spin {
    display: flex;
    border: 1px solid #c9ccd0;
    background-color: #fff;
}
.panel .spin input {
    flex: 1;
    min-width: 0;
    border: none;
}
.spin i {
    position: relative;
    width: 9px;
    border-left: 1px solid #c9ccd0;
    background: linear-gradient(#f5f5f5 45%, #c9ccd0 45%, #c9ccd0 55%, #f5f5f5 55%);
}
.spin i::before, .spin i::after {
    content: "";
    position: absolute;
    top: 1px;
    left: 2px;
    border: 2px solid transparent;
    border-top: none;
    border-bottom-color: #456;
}
.spin i::after {
    top: 8px;
    border-top: 2px solid #456;
    border-bottom: none;
}
.sets {
    display: flex;
    gap: 12px;
}
fieldset {
    display: grid;
    align-items: center;
    gap: 3px 4px;
    min-width: 0;
    margin: 0;
    padding: 1px 1px 2px 5px;
    border: 1px solid #dcdee1;
}
legend {
    padding: 0 2px;
    line-height: 8px;
}
.real {
    flex: 1;
    grid-template-columns: 47px 1fr;
}
.now {
    width: 138px;
    padding-right: 8px;
    grid-template-columns: 35px 1fr;
}
.now input {
    min-width: 0;
}
.panel .combo {
    height: 12px;
    border-color: #e1e4e8;
}
.panel .combo.focus {
    padding: 1px;
    border-color: #7eb4ea;
}
.panel .combo select {
    border: none;
    padding: 0;
}
.panel .combo input {
    width: 10px;
    height: 8px;
    padding: 0;
    border: none;
    background-color: #3399ff;
    color: #fff;
    line-height: 8px;
}
.actions {
    display: flex;
    gap: 8px;
}
.actions button {
    width: 51px;
    height: 13px;
    border: 1px solid #8f9296;
    border-radius: 2px;
    background: linear-gradient(#f6f6f6, #d9d9d9);
    line-height: 10px;
}
.actions .help {
    margin-right: auto;
}
.actions .ok {
    border-color: #3c9fd0;
}

/* notes drawn over the window */
.red-frame {
    position: absolute;
    top: 216px;
    left: 347px;
    width: 340px;
    height: 119px;
    border: 2px solid #f8353a;
}
.red-arrow {
    position: absolute;
    top: 337px;
    left: 496px;
}
.hint {
    position: absolute;
    top: 365px;
    left: 442px;
    margin: 0;
    font-size: 11px;
    line-height: 16px;
    color: #f0454a;
    white-space: nowrap;
}
.brand {
    position: absolute;
    right: 3px;
    bottom: 3px;
    display: flex;
    align-items: center;
    gap: 3px;
}
.brand div {
    display: flex;
    flex-direction: column;
}
.brand strong {
    font-size: 11px;
    line-height: 13px;
    color: #1a8fe0;
}
.brand span {
    font-family: "DejaVu Sans", sans-serif;
    font-size: 7px;
    font-weight: bold;
    line-height: 8px;
    color: #ee6a2a;
}
```
